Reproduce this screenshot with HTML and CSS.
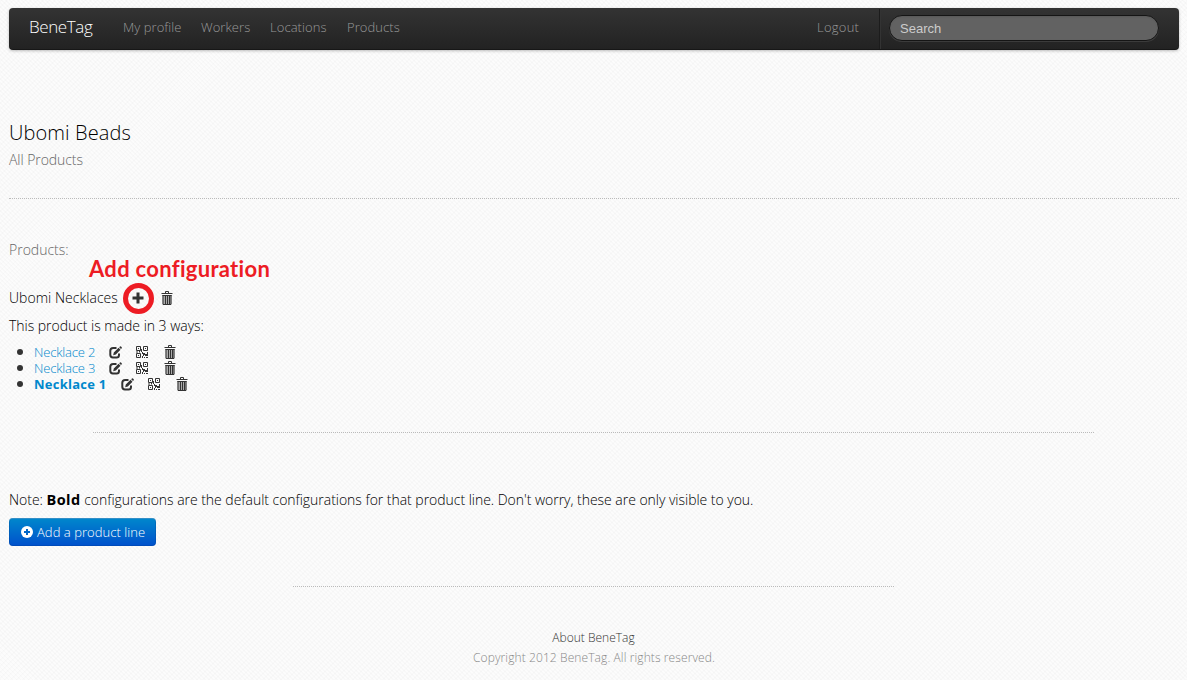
FILE: index.html
```html
<!DOCTYPE html>
<html lang="en">
<head>
<meta charset="utf-8">
<title>BeneTag</title>
<link rel="stylesheet" href="styles.css">
</head>
<body>
<svg class="defs" width="0" height="0">
  <symbol id="edit" viewBox="0 0 13 13">
    <path d="M7.5 2H4.2Q1.3 2 1.3 4.8V8.8Q1.3 11.5 4 11.5H7.6Q10 11.5 10 9V7.5" fill="none" stroke="#333" stroke-width="2"/>
    <path d="M4.2 9.2 4.8 6.5 9.6 1.8 11.5 3.7 6.8 8.5ZM10.2 1.2 11 .4Q11.5 0 12 .5L12.7 1.2Q13.1 1.7 12.7 2.2L12 3Z" fill="#333"/>
  </symbol>
  <symbol id="qr" viewBox="0 0 12 12">
    <path d="M.5.5h4v4h-4zM7.5.5h4v4h-4zM.5 7.5h4v4h-4z" fill="none" stroke="#333"/>
    <path d="M2 2h1v1h-1zM9 2h1v1h-1zM2 9h1v1h-1zM5 3h1v3h-1zM0 5.5h2v1h-2zM3 5h1v1.5h-1zM6 6h1v1h2v1h2v-2h1v4h-3v-1h-1v1h-1v-2h-1zM6 10h1v2h-1zM8 11h1v1h-1zM10 11h2v1h-2z" fill="#333"/>
  </symbol>
  <symbol id="trash" viewBox="0 0 12 14">
    <path d="M4.5 2V.5H7.5V2M.5 2.5H11.5" fill="none" stroke="#333"/>
    <path d="M1.5 4H10.5V13H1.5Z" fill="#aaa"/>
    <path d="M2 4V13.5H10V4M4.5 5V13M6.5 5V13M8.5 5V13M1.5 4.5H10.5" fill="none" stroke="#333"/>
  </symbol>
</svg>
<nav class="navbar">
  <a class="brand">BeneTag</a>
  <a class="nav-link profile">My profile</a>
  <a class="nav-link workers">Workers</a>
  <a class="nav-link locations">Locations</a>
  <a class="nav-link products">Products</a>
  <a class="nav-link logout">Logout</a>
  <div class="search-area"><input class="search" type="text" placeholder="Search"></div>
</nav>
<main class="content">
  <h1 class="title">Ubomi Beads</h1>
  <p class="subtitle">All Products</p>
  <hr class="rule">
  <p class="section-label">Products:</p>
  <div class="product-line">
    <span class="line-name">Ubomi Necklaces</span>
    <span class="add-config">
      <svg width="12" height="12" viewBox="0 0 12 12"><path d="M4.5 .5h3v4H11.5v3H7.5v4h-3v-4H.5v-3h4z" fill="#333"/></svg>
      <span class="callout">Add configuration</span>
      <span class="ring"></span>
    </span>
    <svg class="trash" width="12" height="14"><use href="#trash"/></svg>
  </div>
  <p class="ways">This product is made in 3 ways:</p>
  <ul class="configs">
    <li class="config"><a>Necklace 2</a><svg class="edit" width="13" height="13"><use href="#edit"/></svg><svg class="qr" width="12" height="12"><use href="#qr"/></svg><svg class="bin" width="12" height="14"><use href="#trash"/></svg></li>
    <li class="config"><a>Necklace 3</a><svg class="edit" width="13" height="13"><use href="#edit"/></svg><svg class="qr" width="12" height="12"><use href="#qr"/></svg><svg class="bin" width="12" height="14"><use href="#trash"/></svg></li>
    <li class="config default"><a>Necklace 1</a><svg class="edit" width="13" height="13"><use href="#edit"/></svg><svg class="qr" width="12" height="12"><use href="#qr"/></svg><svg class="bin" width="12" height="14"><use href="#trash"/></svg></li>
  </ul>
  <hr class="rule list-end">
  <p class="note">Note: <b>Bold</b> configurations are the default configurations for that product line. Don't worry, these are only visible to you.</p>
  <a class="button"><svg width="12" height="12" viewBox="0 0 12 12"><circle cx="6" cy="6" r="6" fill="#fff"/><path d="M5 3h2v2h2v2H7v2H5V7H3V5h2z" fill="#0067c9"/></svg><span>Add a product line</span></a>
</main>
<footer class="footer">
  <hr class="rule footer-rule">
  <a class="about">About BeneTag</a>
  <p class="copyright">Copyright 2012 BeneTag. All rights reserved.</p>
</footer>
</body>
</html>
```
FILE: styles.css
```css
* { box-sizing: border-box; }
body {
  margin: 0;
  padding: 8px 8px 0 9px;
  height: 680px;
  overflow: hidden;
  font: 300 14px/20px "Open Sans", sans-serif;
  color: #000;
  background-color: #fcfcfc;
  background-image:
    repeating-linear-gradient(45deg, rgba(0,0,0,.014) 0 1.4px, transparent 1.4px 2.83px),
    repeating-linear-gradient(-45deg, rgba(0,0,0,.012) 0 1.4px, transparent 1.4px 4.24px);
}
h1, p, ul { margin: 0; padding: 0; font-weight: 300; }
.defs { position: absolute; }
.navbar {
  display: flex;
  align-items: center;
  height: 42px;
  padding: 0 20px 0 20px;
  border-radius: 4px;
  background: linear-gradient(#333, #222);
  box-shadow: 0 1px 3px rgba(0,0,0,.25), inset 0 -1px 0 rgba(0,0,0,.3);
}
.brand { width: 94px; font-size: 17px; letter-spacing: -.4px; color: #fff; white-space: nowrap; padding-bottom: 5px; }
.nav-link { font-size: 13px; letter-spacing: .06px; color: #999; padding-bottom: 5px; white-space: nowrap; }
.profile { width: 78px; }
.workers { width: 69px; }
.locations { width: 77px; }
.logout { margin-left: auto; width: 62px; letter-spacing: .25px; }
.search-area {
  display: flex;
  align-items: center;
  height: 40px;
  padding: 0 0 2px 9px;
  border-left: 1px solid #1c1c1c;
  box-shadow: inset 1px 0 0 #333;
}
.search {
  width: 270px;
  height: 26px;
  padding: 0 10px;
  border: 1px solid #151515;
  border-radius: 13px;
  background: #626262;
  box-shadow: inset 0 1px 2px rgba(0,0,0,.1), 0 1px 0 rgba(255,255,255,.1);
  font: 13px/16px "Liberation Sans", sans-serif;
}
.search::placeholder { color: #ccc; opacity: 1; }
.content { display: flex; flex-direction: column; align-items: flex-start; padding-top: 68px; }
.title { font-size: 20px; line-height: 30px; letter-spacing: .1px; }
.subtitle { margin-top: 2px; color: #666; letter-spacing: -.06px; }
.rule { width: 100%; height: 0; margin: 28px 0 0; border: 0; border-top: 1px dotted #bbb; }
.section-label { margin-top: 41px; color: #666; }
.product-line { display: flex; align-items: center; height: 20px; margin-top: 28px; }
.line-name { width: 109px; letter-spacing: .03px; white-space: nowrap; }
.add-config { position: relative; display: flex; margin-left: 14px; }
.ring { position: absolute; left: -9px; top: -9px; width: 31px; height: 31px; border: 5px solid #ed1c24; border-radius: 50%; }
.callout { position: absolute; left: -43px; top: -37px; font: 700 22px/28px Lato, sans-serif; letter-spacing: .3px; color: #ed1c24; white-space: nowrap; }
.trash { margin-left: 17px; }
.ways { margin-top: 8px; letter-spacing: -.03px; }
.configs { margin-top: 8px; list-style: none; }
.config { display: flex; align-items: center; height: 16px; padding-left: 8px; font-size: 13px; line-height: 16px; letter-spacing: -.17px; color: #0088cc; }
.config::before { content: ""; width: 6px; height: 6px; margin-right: 11px; border-radius: 50%; background: #333; }
.config a { width: 61px; white-space: nowrap; }
.default { font-weight: 700; letter-spacing: .25px; }
.default a { width: 73px; }
.edit { margin-left: 14px; }
.qr { margin-left: 14px; }
.bin { margin-left: 16px; }
.list-end { width: 1001px; margin: 40px 0 0 84px; }
.note { margin-top: 57px; letter-spacing: -.03px; }
.note b { font-weight: 700; font-size: 14.5px; letter-spacing: .45px; }
.button {
  display: flex;
  align-items: center;
  gap: 4px;
  width: 147px;
  height: 28px;
  margin-top: 8px;
  padding-left: 12px;
  border-radius: 4px;
  background: linear-gradient(#0088cc, #0050cc);
  box-shadow: inset 0 1px 0 rgba(255,255,255,.2), inset 0 0 0 1px rgba(0,60,130,.25);
  font-size: 13px;
  letter-spacing: .04px;
  color: #fff;
  white-space: nowrap;
}
.footer { display: flex; flex-direction: column; align-items: center; font-size: 12px; }
.footer-rule { width: 601px; margin: 40px 2px 0 0; }
.about { margin: 41px 1px 0 0; color: #333; }
.copyright { color: #888; letter-spacing: .1px; }
```
